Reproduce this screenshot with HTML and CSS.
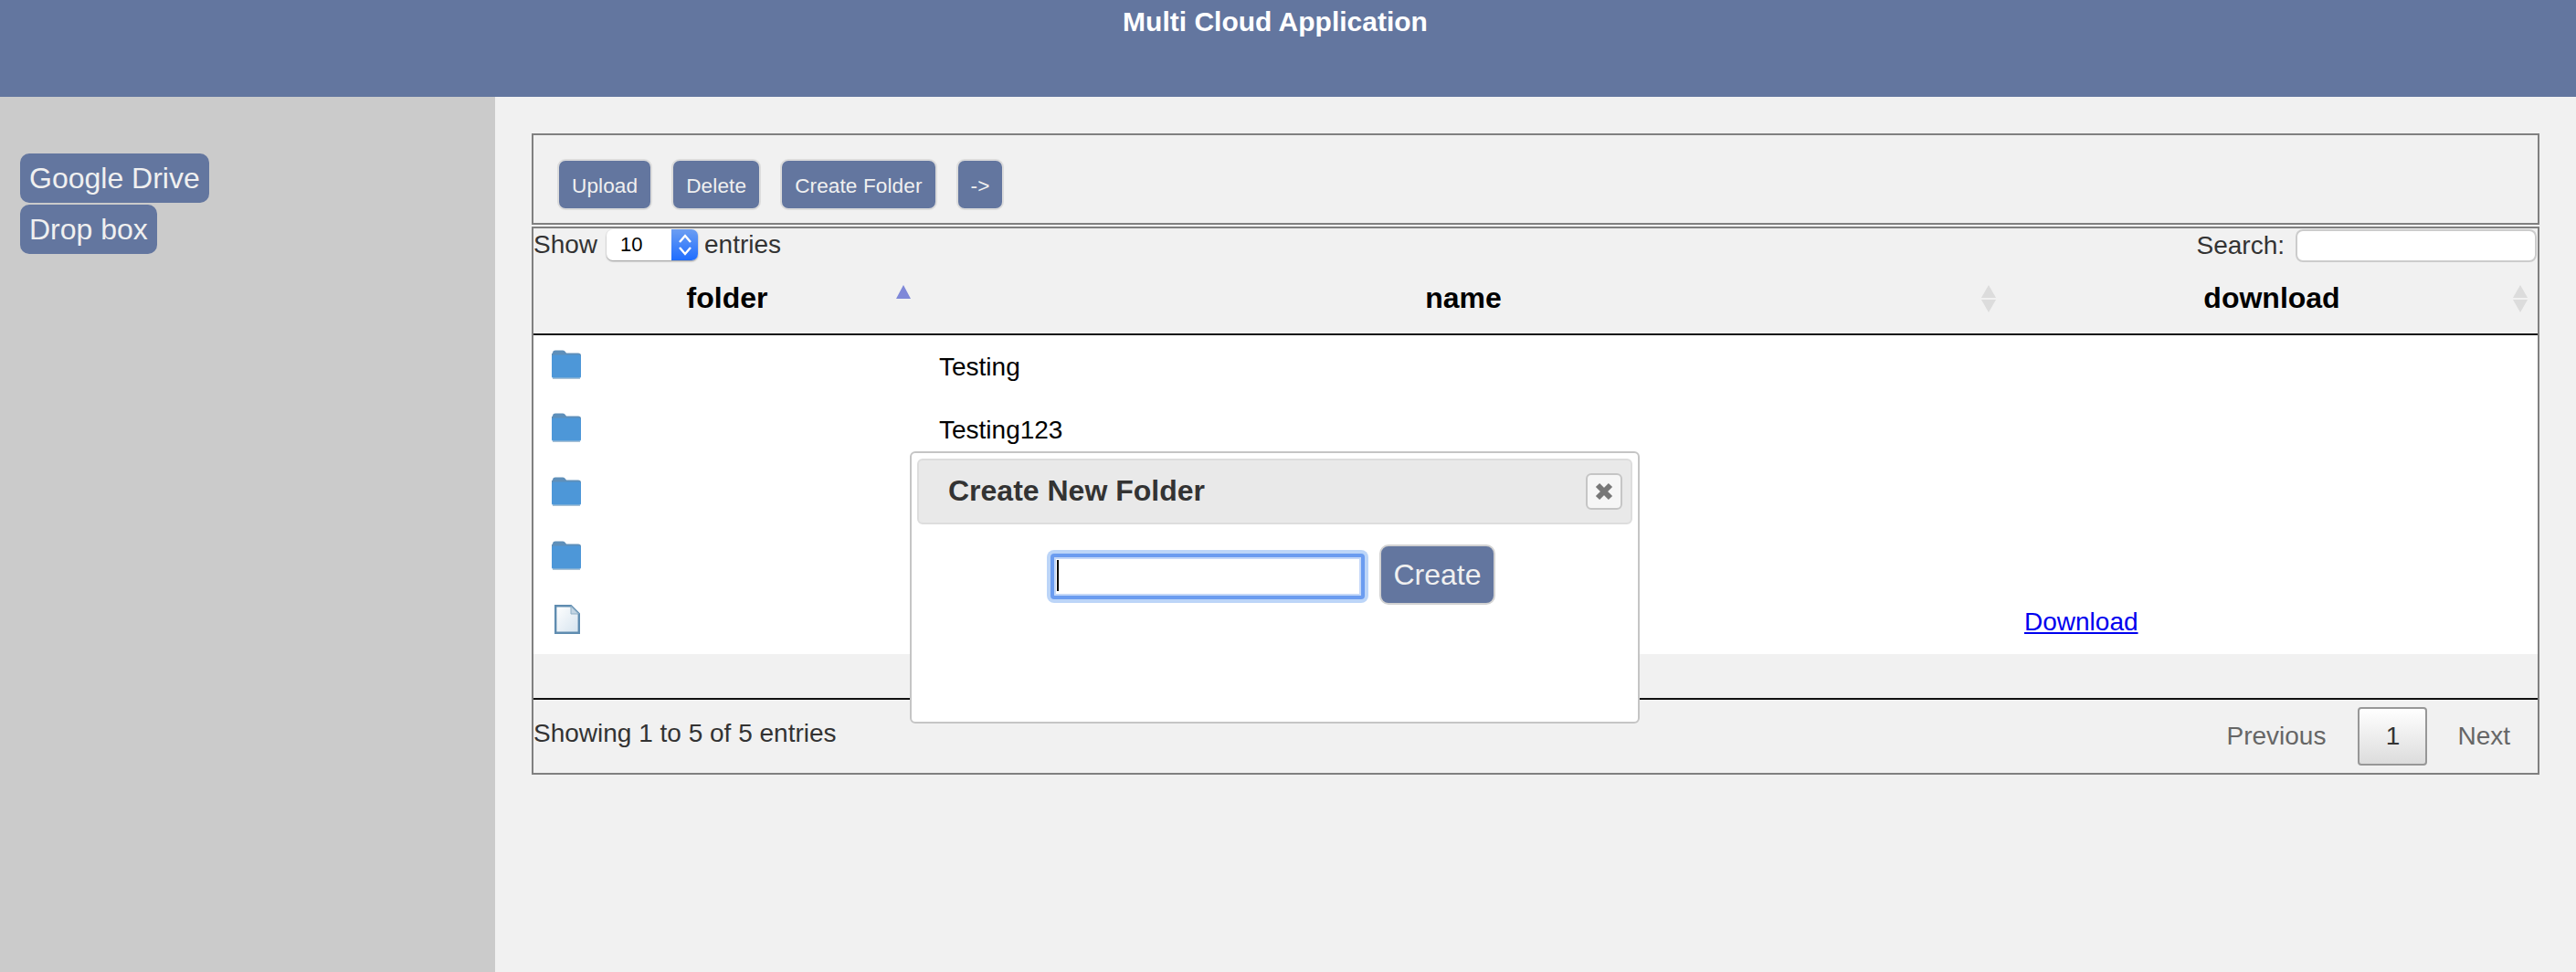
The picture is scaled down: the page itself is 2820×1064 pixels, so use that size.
FILE: index.html
```html
<!DOCTYPE html>
<html lang="en">
<head>
  <meta charset="UTF-8">
  <title>Multi Cloud Application</title>
  <link rel="stylesheet" href="styles.css">
</head>
<body>

<svg class="svg-defs" width="0" height="0">
  <defs>
    <linearGradient id="paper" x1="0" y1="0" x2="1" y2="1">
      <stop offset="0" stop-color="#ffffff"/>
      <stop offset="1" stop-color="#d5e3ee"/>
    </linearGradient>
    <symbol id="folder" viewBox="0 0 32 32">
      <path d="M1 3.5C1 1.5 2 0.5 4 0.5H12C14 0.5 15 2 16 3.5H29C31 3.5 32 4.5 32 6V12H0V4Z" fill="#5e8fba"/>
      <path d="M0 8C0 6 1 5.5 3 5.5H29C31 5.5 32 6 32 8V29C32 30.5 31 31 29 31H3C1 31 0 30.5 0 29Z" fill="#4d97d8"/>
      <path d="M1 30.5H31V32H1Z" fill="#a9c2d6"/>
    </symbol>
    <symbol id="file" viewBox="0 0 28 32">
      <path d="M1.2 1.2H18L26.8 10V30.8H1.2Z" fill="url(#paper)" stroke="#5f8cb0" stroke-width="2.4"/>
      <path d="M18 1.5V10H26.5Z" fill="#c3d5e3" stroke="#8fafc6" stroke-width="1"/>
    </symbol>
    <symbol id="sort-both" viewBox="0 0 16 30">
      <path d="M8 0L16 14H0Z" fill="#dcdcdc"/>
      <path d="M0 16H16L8 30Z" fill="#dcdcdc"/>
    </symbol>
    <symbol id="sort-asc" viewBox="0 0 16 30">
      <path d="M8 0L16 15H0Z" fill="#7f88d8"/>
    </symbol>
  </defs>
</svg>

<header class="top-bar">Multi Cloud Application</header>

<div class="layout">
  <aside class="sidebar">
    <button class="side-btn">Google Drive</button>
    <button class="side-btn">Drop box</button>
  </aside>

  <main class="content">
    <div class="toolbar">
      <button class="tool-btn">Upload</button>
      <button class="tool-btn">Delete</button>
      <button class="tool-btn">Create Folder</button>
      <button class="tool-btn">-&gt;</button>
    </div>

    <div class="table-box">
      <div class="filter-row">
        <div class="length-control">
          <span>Show</span>
          <div class="length-select">
            <span class="length-value">10</span>
            <span class="length-arrows">
              <svg width="16" height="26" viewBox="0 0 16 26" fill="none" stroke="#fff" stroke-width="2.4">
                <path d="M2 10L8 3L14 10"/>
                <path d="M2 16L8 23L14 16"/>
              </svg>
            </span>
          </div>
          <span class="length-suffix">entries</span>
        </div>
        <label class="search-control">Search: <input type="text" class="search-input"></label>
      </div>

      <table class="files">
        <colgroup>
          <col class="col-folder">
          <col class="col-name">
          <col class="col-download">
        </colgroup>
        <thead>
          <tr>
            <th>folder<svg class="sort-icon"><use href="#sort-asc"/></svg></th>
            <th>name<svg class="sort-icon"><use href="#sort-both"/></svg></th>
            <th>download<svg class="sort-icon"><use href="#sort-both"/></svg></th>
          </tr>
        </thead>
        <tbody>
          <tr>
            <td><svg class="row-icon folder-icon"><use href="#folder"/></svg></td>
            <td>Testing</td>
            <td></td>
          </tr>
          <tr>
            <td><svg class="row-icon folder-icon"><use href="#folder"/></svg></td>
            <td>Testing123</td>
            <td></td>
          </tr>
          <tr>
            <td><svg class="row-icon folder-icon"><use href="#folder"/></svg></td>
            <td></td>
            <td></td>
          </tr>
          <tr>
            <td><svg class="row-icon folder-icon"><use href="#folder"/></svg></td>
            <td></td>
            <td></td>
          </tr>
          <tr>
            <td><svg class="row-icon file-icon"><use href="#file"/></svg></td>
            <td></td>
            <td><a href="#">Download</a></td>
          </tr>
        </tbody>
      </table>

      <div class="table-foot">
        <div class="info">Showing 1 to 5 of 5 entries</div>
        <div class="pages">
          <a class="page-link">Previous</a>
          <a class="page-current">1</a>
          <a class="page-link">Next</a>
        </div>
      </div>
    </div>
  </main>
</div>

<div class="dialog">
  <div class="dialog-title">
    <span class="dialog-heading">Create New Folder</span>
    <button class="dialog-close">
      <svg width="22" height="22" viewBox="0 0 22 22" stroke="#777" stroke-width="6">
        <path d="M4 4L18 18M18 4L4 18"/>
      </svg>
    </button>
  </div>
  <div class="dialog-body">
    <div class="name-field">
      <input type="text" class="name-input">
      <span class="caret"></span>
    </div>
    <button class="create-btn">Create</button>
  </div>
</div>

</body>
</html>
```

FILE: styles.css
```css
* {
  box-sizing: border-box;
}

html, body {
  height: 100%;
}

body {
  margin: 0;
  overflow: hidden;
  background: #f1f1f1;
  color: #333;
  font-family: "Liberation Sans", Arial, sans-serif;
  font-size: 28px;
}

.svg-defs {
  position: absolute;
}

.top-bar {
  height: 106px;
  padding: 7px 28px 0 0;
  background: #63769f;
  color: #fff;
  font-size: 30px;
  font-weight: bold;
  line-height: 34px;
  text-align: center;
}

.layout {
  display: grid;
  grid-template-columns: 542px 1fr;
  height: 958px;
}

.sidebar {
  display: flex;
  flex-direction: column;
  align-items: flex-start;
  gap: 2px;
  padding: 62px 0 0 22px;
  background: #cbcbcb;
}

.side-btn {
  height: 54px;
  padding: 0 10px;
  border: none;
  border-radius: 10px;
  background: #63769f;
  color: #f0f0f0;
  font: 32px "Liberation Sans", Arial, sans-serif;
}

.content {
  padding: 40px 40px 0;
}

.toolbar {
  display: flex;
  gap: 21px;
  height: 100px;
  padding: 26px 0 0 26px;
  border: 2px solid #808080;
}

.tool-btn {
  height: 56px;
  padding: 4px 14px 0;
  border: 2px solid #dcdcdc;
  border-radius: 9px;
  background: #63769f;
  color: #f0f0f0;
  font: 22.6px "Liberation Sans", Arial, sans-serif;
  letter-spacing: 0.1px;
}

.table-box {
  height: 600px;
  margin-top: 2px;
  border: 2px solid #808080;
}

.filter-row {
  display: flex;
  justify-content: space-between;
  align-items: flex-start;
  height: 44px;
  padding: 1px 1px 0 0;
}

.length-control {
  display: flex;
  align-items: center;
  gap: 10px;
  height: 34px;
}

.length-suffix {
  margin-left: -3px;
}

.length-select {
  display: flex;
  width: 100px;
  height: 34px;
  overflow: hidden;
  border-radius: 7px;
  background: #fff;
  box-shadow: 0 1px 2px rgba(0, 0, 0, 0.4);
  color: #000;
  font-size: 22px;
}

.length-value {
  flex: 1;
  padding-left: 15px;
  line-height: 34px;
}

.length-arrows {
  display: flex;
  justify-content: center;
  align-items: center;
  width: 29px;
  background: linear-gradient(#6c9ef2, #1f6dff);
}

.search-control {
  display: flex;
  align-items: center;
  gap: 12px;
  height: 36px;
}

.search-input {
  width: 264px;
  height: 36px;
  border: 2px solid #ccc;
  border-radius: 8px;
  background: #fff;
}

.files {
  width: 100%;
  border-collapse: collapse;
  table-layout: fixed;
}

.col-folder {
  width: 424px;
}

.col-name {
  width: 1188px;
}

.files th {
  position: relative;
  height: 72px;
  padding: 0 0 6px;
  border-bottom: 2px solid #111;
  color: #000;
  font-size: 32px;
  font-weight: bold;
  text-align: center;
}

.sort-icon {
  position: absolute;
  top: 18px;
  right: 11px;
  width: 16px;
  height: 30px;
}

.files td {
  height: 70px;
  padding: 0 20px;
  background: #fff;
  color: #000;
  vertical-align: middle;
}

.row-icon {
  display: block;
  height: 32px;
  margin-bottom: 6px;
}

.folder-icon {
  width: 32px;
}

.file-icon {
  width: 28px;
  margin-left: 3px;
}

.files a {
  color: #00e;
}

.table-foot {
  display: flex;
  justify-content: space-between;
  height: 81px;
  margin-top: 48px;
  border-top: 2px solid #111;
}

.info {
  padding-top: 21px;
}

.pages {
  display: flex;
  align-items: center;
  height: 64px;
  margin: 8px 30px 0 0;
}

.page-link {
  color: #666;
}

.page-current {
  width: 76px;
  height: 64px;
  margin: 0 33px 0 35px;
  border: 2px solid #979797;
  border-radius: 4px;
  background: linear-gradient(#fff, #dcdcdc);
  line-height: 60px;
  text-align: center;
}

.dialog {
  position: absolute;
  top: 494px;
  left: 996px;
  width: 799px;
  height: 298px;
  padding: 6px;
  border: 2px solid #c5c5c5;
  border-radius: 6px;
  background: #fff;
}

.dialog-title {
  display: flex;
  justify-content: space-between;
  align-items: center;
  height: 72px;
  padding: 0 9px 0 32px;
  border: 2px solid #ddd;
  border-radius: 6px;
  background: #e9e9e9;
  color: #333;
  font-size: 32px;
  font-weight: bold;
}

.dialog-heading {
  margin-bottom: 2px;
}

.dialog-close {
  display: flex;
  justify-content: center;
  align-items: center;
  width: 40px;
  height: 40px;
  padding: 0;
  border: 2px solid #c5c5c5;
  border-radius: 6px;
  background: #f6f6f6;
}

.dialog-body {
  display: flex;
  align-items: center;
  gap: 16px;
  padding: 22px 0 0 146px;
}

.name-field {
  position: relative;
  margin-top: 3px;
}

.name-input {
  display: block;
  width: 344px;
  height: 50px;
  border: 4px solid #6b9cf0;
  border-radius: 4px;
  outline: none;
  background: #fff;
  box-shadow: 0 0 0 4px #bcd5f8, inset 0 0 0 2px #c5d8f8;
}

.caret {
  position: absolute;
  top: 7px;
  left: 7px;
  width: 2px;
  height: 34px;
  background: #000;
}

.create-btn {
  width: 127px;
  height: 66px;
  padding: 0;
  border: 2px solid #d2d2d2;
  border-radius: 10px;
  background: #63769f;
  color: #f0f0f0;
  font: 32px "Liberation Sans", Arial, sans-serif;
}
```
